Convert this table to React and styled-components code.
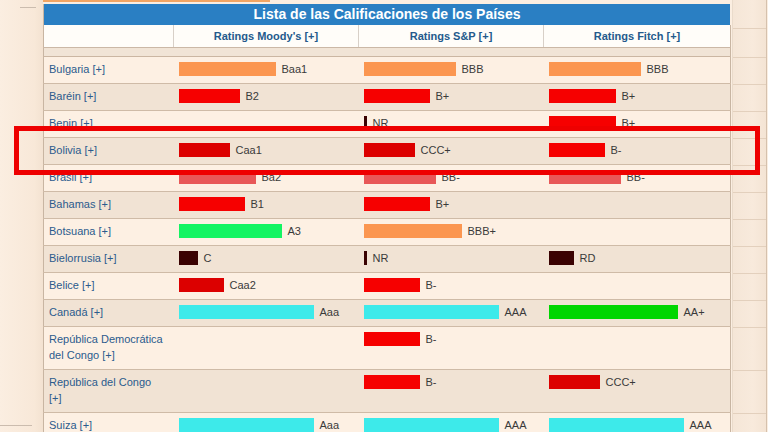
import React from "react";
import styled, { createGlobalStyle } from "styled-components";

const GlobalStyle = createGlobalStyle`
  html, body { margin: 0; padding: 0; }
  body {
    background: #fbeee1;
    font-family: "Liberation Sans", Arial, sans-serif;
  }
`;

const COLORS = {
  orange: "#fb9650",
  red: "#f60000",
  darkred: "#dc0000",
  pink: "#e85858",
  green: "#14f462",
  cyan: "#3deaea",
  green2: "#00d600",
  dark: "#3a0202",
};

const rows = [
  { name: ["Bulgaria [+]"], m: ["Baa1", 97, "orange"], s: ["BBB", 92, "orange"], f: ["BBB", 92, "orange"] },
  { name: ["Baréin [+]"], m: ["B2", 61, "red"], s: ["B+", 66, "red"], f: ["B+", 67, "red"] },
  { name: ["Benin [+]"], m: null, s: ["NR", 3, "dark"], f: ["B+", 67, "red"] },
  { name: ["Bolivia [+]"], m: ["Caa1", 51, "darkred"], s: ["CCC+", 51, "darkred"], f: ["B-", 56, "red"] },
  { name: ["Brasil [+]"], m: ["Ba2", 77, "pink"], s: ["BB-", 72, "pink"], f: ["BB-", 72, "pink"] },
  { name: ["Bahamas [+]"], m: ["B1", 66, "red"], s: ["B+", 66, "red"], f: null },
  { name: ["Botsuana [+]"], m: ["A3", 103, "green"], s: ["BBB+", 98, "orange"], f: null },
  { name: ["Bielorrusia [+]"], m: ["C", 19, "dark"], s: ["NR", 3, "dark"], f: ["RD", 25, "dark"] },
  { name: ["Belice [+]"], m: ["Caa2", 45, "darkred"], s: ["B-", 56, "red"], f: null },
  { name: ["Canadá [+]"], m: ["Aaa", 135, "cyan"], s: ["AAA", 135, "cyan"], f: ["AA+", 129, "green2"] },
  { name: ["República Democrática", "del Congo [+]"], m: null, s: ["B-", 56, "red"], f: null },
  { name: ["República del Congo", "[+]"], m: null, s: ["B-", 56, "red"], f: ["CCC+", 51, "darkred"] },
  { name: ["Suiza [+]"], m: ["Aaa", 135, "cyan"], s: ["AAA", 135, "cyan"], f: ["AAA", 135, "cyan"] },
];

const Page = styled.div`
  position: relative;
  width: 768px;
  height: 432px;
  overflow: hidden;
  display: flex;
  align-items: flex-start;
`;

const Gutter = styled.div`
  width: 43px;
  height: 432px;
  flex: none;
  display: flex;
  flex-direction: column;
  justify-content: space-between;
  background: linear-gradient(90deg, #fbeee1 0%, #f8e8d8 80%, #f3e2d1 100%);
`;

const GutterRule = styled.div`
  height: 1px;
  background: #cbbcae;
  width: ${(p) => p.$w}px;
  margin-left: ${(p) => p.$left}px;
  margin-top: ${(p) => p.$top || 0}px;
  margin-bottom: ${(p) => p.$bottom || 0}px;
`;

const TableArea = styled.div`
  width: 687px;
  flex: none;
  display: flex;
  flex-direction: column;
`;

const TopAccent = styled.div`
  width: 227px;
  height: 2px;
  background: #f2a563;
  margin-bottom: 2px;
`;

const Title = styled.div`
  height: 21px;
  line-height: 21px;
  background: #2a7fc3;
  color: #ffffff;
  font-weight: bold;
  font-size: 14px;
  text-align: center;
  border-left: 1px solid #c8b5a2;
`;

const Table = styled.table`
  width: 687px;
  table-layout: fixed;
  border-collapse: collapse;
  font-size: 11px;
`;

const HeadCell = styled.th`
  height: 22px;
  padding: 0;
  background: #fffdf9;
  color: #245a8c;
  font-weight: bold;
  font-size: 11px;
  text-align: center;
  border-left: 1px solid #d8d0c8;
  border-bottom: 1px solid #cbb8a6;
  &:first-child { border-left: 1px solid #c8b5a2; }
  &:last-child { border-right: 1px solid #c8b5a2; }
`;

const SpacerCell = styled.td`
  height: 8px;
  padding: 0;
  background: #f1e4d6;
  border-bottom: 1px solid #cbb6a2;
  border-left: 1px solid #c8b5a2;
  border-right: 1px solid #c8b5a2;
`;

const Row = styled.tr`
  background: ${(p) => (p.$alt ? "#f1e3d4" : "#fdf0e3")};
`;

const Cell = styled.td`
  padding: 4px 5px 6px 5px;
  line-height: 16px;
  vertical-align: top;
  border-bottom: 1px solid #cfbba7;
  color: #3a3a3a;
  white-space: nowrap;
  &:first-child { border-left: 1px solid #c8b5a2; }
  &:last-child { border-right: 1px solid #c8b5a2; }
`;

const CountryLink = styled.span`
  color: #2b5b8d;
`;

const Bar = styled.span`
  display: inline-block;
  height: 14px;
  width: ${(p) => p.$w}px;
  background: ${(p) => p.$c};
  vertical-align: -3px;
  margin-right: 6px;
`;

const SideStrip = styled.div`
  width: 33px;
  margin-left: 2px;
  flex: none;
  display: flex;
  flex-direction: column;
  border-left: 1px solid #eadbcb;
  border-right: 1px solid #d5c1ad;
  background: linear-gradient(90deg, #f5e6d7 0%, #f8eadc 60%, #f4e4d4 100%);
  height: 432px;
`;

const StripCell = styled.div`
  height: ${(p) => p.$h}px;
  flex: none;
  box-sizing: border-box;
  border-bottom: 1px solid #e3d0bd;
`;

const Highlight = styled.div`
  position: absolute;
  left: 14px;
  top: 126px;
  width: 746px;
  height: 49px;
  box-sizing: border-box;
  border: 5px solid #ee0000;
  pointer-events: none;
`;

function Rating({ r }) {
  if (!r) return null;
  const [label, w, c] = r;
  return (
    <>
      <Bar $w={w} $c={COLORS[c]} />
      {label}
    </>
  );
}

export default function App() {
  return (
    <>
      <GlobalStyle />
      <Page>
        <Gutter>
          <GutterRule $w={16} $left={20} $top={7} />
          <GutterRule $w={32} $left={0} $bottom={6} />
        </Gutter>
        <TableArea>
          <TopAccent />
          <Title>Lista de las Calificaciones de los Países</Title>
          <Table>
            <colgroup>
              <col style={{ width: 130 }} />
              <col style={{ width: 185 }} />
              <col style={{ width: 185 }} />
              <col style={{ width: 187 }} />
            </colgroup>
            <thead>
              <tr>
                <HeadCell></HeadCell>
                <HeadCell>Ratings Moody's [+]</HeadCell>
                <HeadCell>Ratings S&amp;P [+]</HeadCell>
                <HeadCell>Ratings Fitch [+]</HeadCell>
              </tr>
            </thead>
            <tbody>
              <tr>
                <SpacerCell colSpan={4} />
              </tr>
              {rows.map((r, i) => (
                <Row key={i} $alt={i % 2 === 1}>
                  <Cell>
                    <CountryLink>
                      {r.name.map((line, j) => (
                        <React.Fragment key={j}>
                          {j > 0 && <br />}
                          {line}
                        </React.Fragment>
                      ))}
                    </CountryLink>
                  </Cell>
                  <Cell><Rating r={r.m} /></Cell>
                  <Cell><Rating r={r.s} /></Cell>
                  <Cell><Rating r={r.f} /></Cell>
                </Row>
              ))}
            </tbody>
          </Table>
        </TableArea>
        <SideStrip>
          <StripCell $h={29} />
          <StripCell $h={29} />
          {rows.map((r, i) => (
            <StripCell key={i} $h={r.name.length > 1 ? 43 : 27} />
          ))}
        </SideStrip>
        <Highlight />
      </Page>
    </>
  );
}
